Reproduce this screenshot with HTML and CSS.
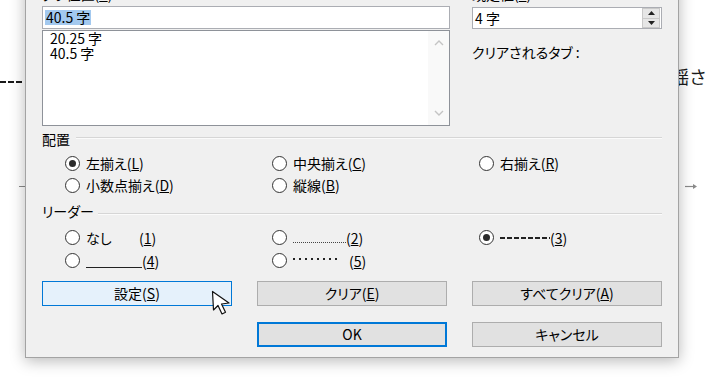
FILE: index.html
```html
<!DOCTYPE html>
<html lang="ja">
<head>
<meta charset="utf-8">
<title>タブとリーダー</title>
<link rel="stylesheet" href="styles.css">
</head>
<body>
<div class="desk">
  <div class="doc-dash"></div>
  <div class="doc-tick"></div>
  <div class="doc-text">揺さ</div>
  <svg class="doc-arrow" width="14" height="7" viewBox="0 0 14 7"><path d="M0 3.5H10" stroke="#8a8a8a" stroke-width="1.2"/><path d="M8 1L12 3.5L8 6Z" fill="#8a8a8a"/></svg>

  <div class="dialog">
    <div class="top">
      <div class="col">
        <div class="label">タブ位置(<u>T</u>):</div>
        <div class="textbox"><span class="sel">40.5 字</span></div>
        <div class="listbox">
          <div class="items">
            <div>20.25 字</div>
            <div>40.5 字</div>
          </div>
          <div class="vscroll">
            <div class="sarrow"><svg width="10" height="6" viewBox="0 0 10 6"><path d="M1 5L5 1L9 5" fill="none" stroke="#c4c4c4" stroke-width="1.4"/></svg></div>
            <div class="sarrow"><svg width="10" height="6" viewBox="0 0 10 6"><path d="M1 1L5 5L9 1" fill="none" stroke="#c4c4c4" stroke-width="1.4"/></svg></div>
          </div>
        </div>
      </div>
      <div class="col">
        <div class="label">既定値(<u>F</u>):</div>
        <div class="spin">
          <span class="spin-val">4 字</span>
          <div class="spin-btns">
            <div class="sb"><svg width="7" height="4" viewBox="0 0 7 4"><path d="M0 4L3.5 0L7 4Z" fill="#222"/></svg></div>
            <div class="sb"><svg width="7" height="4" viewBox="0 0 7 4"><path d="M0 0L3.5 4L7 0Z" fill="#222"/></svg></div>
          </div>
        </div>
        <div class="clear-label">クリアされるタブ :</div>
      </div>
    </div>

    <div class="group-head align-head"><span>配置</span><i class="rule"></i></div>
    <div class="opts align-opts">
      <div class="opt"><span class="radio on"></span>左揃え(<u>L</u>)</div>
      <div class="opt"><span class="radio"></span>中央揃え(<u>C</u>)</div>
      <div class="opt"><span class="radio"></span>右揃え(<u>R</u>)</div>
      <div class="opt"><span class="radio"></span>小数点揃え(<u>D</u>)</div>
      <div class="opt"><span class="radio"></span>縦線(<u>B</u>)</div>
    </div>

    <div class="group-head leader-head"><span>リーダー</span><i class="rule"></i></div>
    <div class="opts leader-opts">
      <div class="opt"><span class="radio"></span><span class="lead-none">なし</span>(<u>1</u>)</div>
      <div class="opt"><span class="radio"></span><span class="lead-dots"></span>(<u>2</u>)</div>
      <div class="opt"><span class="radio on"></span><span class="lead-dash"></span>(<u>3</u>)</div>
      <div class="opt"><span class="radio"></span><span class="lead-line"></span>(<u>4</u>)</div>
      <div class="opt"><span class="radio"></span><span class="lead-mid"></span>(<u>5</u>)</div>
    </div>

    <div class="buttons">
      <div class="btn hover">設定(<u>S</u>)</div>
      <div class="btn">クリア(<u>E</u>)</div>
      <div class="btn">すべてクリア(<u>A</u>)</div>
      <div class="btn default ok">OK</div>
      <div class="btn">キャンセル</div>
    </div>
  </div>

  <svg class="cursor" width="22" height="27" viewBox="0 0 22 27">
    <path d="M1.5 1.5L2.5 20L7 15.5L11 24L14.5 22.3L10.5 14L18 13Z" fill="#fff" stroke="#111" stroke-width="1.2" stroke-linejoin="round"/>
  </svg>
</div>
</body>
</html>
```

FILE: styles.css
```css
html, body {
  margin: 0;
  padding: 0;
  background: #ffffff;
}

body {
  font-family: "Noto Sans CJK JP", "Noto Sans", sans-serif;
  font-size: 14px;
  color: #000;
}

u {
  text-decoration: underline;
  text-underline-offset: 1px;
  text-decoration-thickness: 1px;
}

.desk {
  position: relative;
  width: 707px;
  height: 381px;
  overflow: hidden;
  background: #ffffff;
}

/* background document fragments */
.doc-dash {
  position: absolute;
  left: 0;
  top: 81px;
  width: 23px;
  height: 2px;
  background: repeating-linear-gradient(90deg, #1a1a1a 0 6px, transparent 6px 8px);
}

.doc-tick {
  position: absolute;
  left: 19px;
  top: 186px;
  width: 6px;
  height: 1px;
  background: #8a8a8a;
}

.doc-text {
  position: absolute;
  left: 671px;
  top: 65px;
  font-size: 18px;
  line-height: 22px;
  color: #1a1a1a;
}

.doc-arrow {
  position: absolute;
  left: 685px;
  top: 183px;
}

/* dialog window */
.dialog {
  position: absolute;
  left: 25px;
  top: -20px;
  z-index: 2;
  width: 654px;
  box-sizing: border-box;
  border: 1px solid #a3a3a3;
  background: #f0f0f0;
  padding: 6px 16px 10px;
  box-shadow: 0 3px 14px rgba(0, 0, 0, 0.28);
  font-feature-settings: "palt";
}

.top {
  display: grid;
  grid-template-columns: 408px 190px;
  column-gap: 22px;
}

.col {
  display: flex;
  flex-direction: column;
}

.label {
  height: 14px;
  line-height: 14px;
}

.textbox {
  margin-top: 5px;
  height: 23px;
  box-sizing: border-box;
  border: 1px solid #abadb3;
  background: #fff;
  padding-left: 2px;
  display: flex;
  align-items: center;
}

.sel {
  background: #a3c9ef;
  line-height: 15px;
  padding: 0 1px;
}

.listbox {
  margin-top: 1px;
  height: 96px;
  box-sizing: border-box;
  border: 1px solid #8e9299;
  background: #fff;
  display: flex;
}

.items {
  flex: 1;
  padding-left: 7px;
  line-height: 15px;
}

.vscroll {
  width: 21px;
  background: #f9f9f9;
  display: flex;
  flex-direction: column;
  justify-content: space-between;
}

.sarrow {
  height: 24px;
  display: flex;
  align-items: center;
  justify-content: center;
}

.spin {
  margin-top: 6px;
  height: 22px;
  box-sizing: border-box;
  border: 1px solid #abadb3;
  background: #fff;
  display: flex;
  align-items: center;
  padding-left: 2px;
}

.spin-val {
  flex: 1;
  line-height: 15px;
}

.spin-btns {
  width: 18px;
  height: 20px;
  margin-right: 1px;
  display: flex;
  flex-direction: column;
}

.sb {
  flex: 1;
  display: flex;
  align-items: center;
  justify-content: center;
  background: #e6e6e6;
  border: 1px solid #c9c9c9;
  box-sizing: border-box;
}

.sb + .sb {
  border-top: none;
}

.clear-label {
  margin-top: 16px;
  line-height: 14px;
}

/* group headers */
.group-head {
  display: flex;
  height: 16px;
  line-height: 16px;
}

.rule {
  flex: 1;
  height: 0;
  border-top: 1px solid #d6d6d6;
  border-bottom: 1px solid #fbfbfb;
  margin-left: 6px;
}

.align-head {
  margin-top: 5px;
}

.align-head .rule {
  margin-top: 6px;
}

.leader-head {
  margin-top: 7px;
}

.leader-head .rule {
  margin-top: 10px;
  margin-left: 4px;
}

/* radio options */
.opts {
  display: grid;
  grid-template-columns: 207px 207px 1fr;
  padding-left: 23px;
}

.align-opts {
  margin-top: 5px;
  grid-auto-rows: 22px;
}

.leader-opts {
  margin-top: 7px;
  grid-auto-rows: 23px;
}

.opt {
  display: flex;
  align-items: center;
  white-space: nowrap;
}

.radio {
  width: 15px;
  height: 15px;
  flex: none;
  box-sizing: border-box;
  border: 1px solid #333;
  border-radius: 50%;
  background: #fff;
  margin-right: 6px;
  display: flex;
  align-items: center;
  justify-content: center;
}

.radio.on::after {
  content: "";
  width: 7px;
  height: 7px;
  border-radius: 50%;
  background: #2b2b2b;
}

.lead-none {
  display: inline-block;
  width: 53px;
}

.lead-line {
  width: 56px;
  height: 14px;
  box-sizing: border-box;
  border-bottom: 1px solid #222;
}

.lead-dots {
  width: 53px;
  height: 10px;
  box-sizing: border-box;
  border-bottom: 1px dotted #444;
}

.lead-mid {
  width: 48px;
  height: 2px;
  margin-right: 8px;
  margin-top: -3px;
  background: repeating-linear-gradient(90deg, #222 0 2px, transparent 2px 6px);
}

.lead-dash {
  width: 50px;
  height: 2px;
  background: repeating-linear-gradient(90deg, #222 0 5px, transparent 5px 7px);
}

/* buttons */
.buttons {
  margin-top: 9px;
  display: grid;
  grid-template-columns: repeat(3, 190px);
  column-gap: 25px;
  row-gap: 16px;
}

.btn {
  height: 25px;
  box-sizing: border-box;
  border: 1px solid #adadad;
  background: #e1e1e1;
  display: flex;
  align-items: center;
  justify-content: center;
  line-height: 15px;
}

.btn.hover {
  background: #e5f1fb;
  border-color: #0078d7;
}

.btn.default {
  border: 2px solid #0078d7;
}

.btn.ok {
  grid-column: 2;
}

.cursor {
  position: absolute;
  left: 211px;
  top: 290px;
  z-index: 5;
}
```
